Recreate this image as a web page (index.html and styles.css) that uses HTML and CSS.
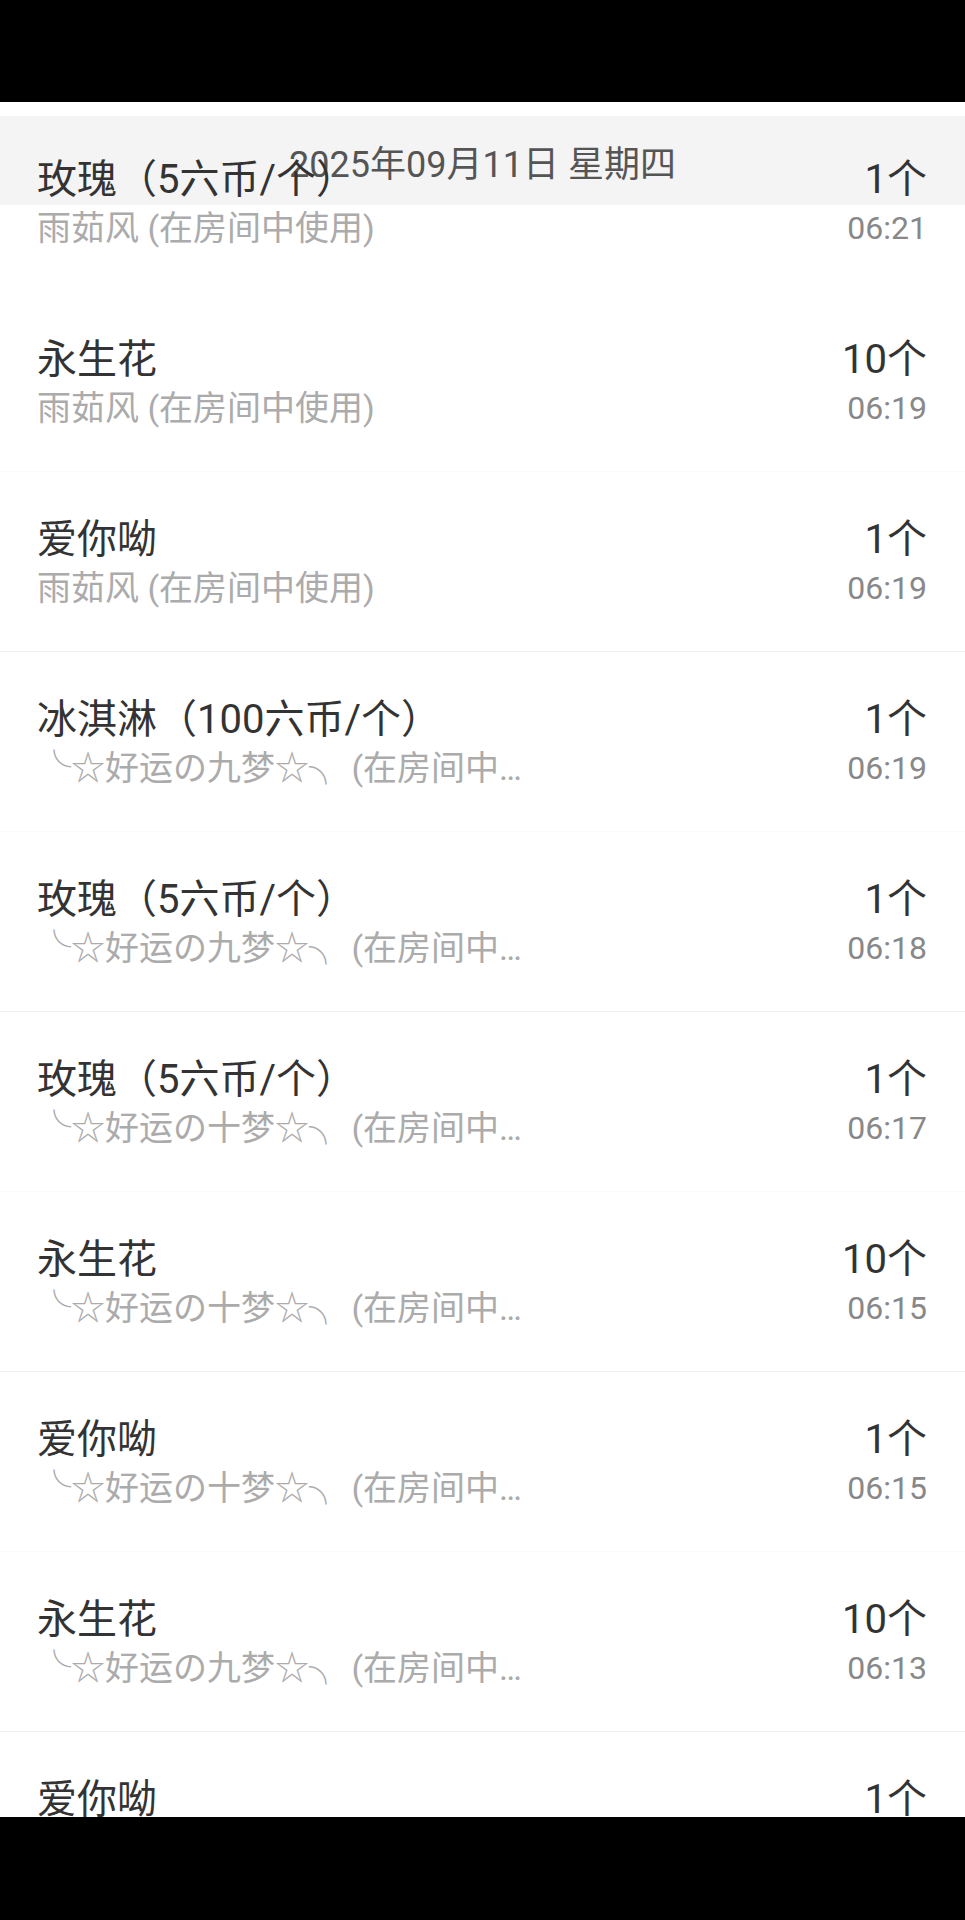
FILE: index.html
```html
<!DOCTYPE html>
<html lang="zh-CN">
<head>
<meta charset="utf-8">
<title>礼物记录</title>
<link rel="stylesheet" href="styles.css">
</head>
<body>
<div class="screen">
  <div class="date-bar">2025年09月11日 星期四</div>
  <ul class="list">
    <li class="row">
      <div class="main"><div class="title">玫瑰（5六币/个）</div><div class="sub">雨茹风 (在房间中使用)</div></div>
      <div class="side"><div class="count">1个</div><div class="time">06:21</div></div>
    </li>
    <li class="row">
      <div class="main"><div class="title">永生花</div><div class="sub">雨茹风 (在房间中使用)</div></div>
      <div class="side"><div class="count">10个</div><div class="time">06:19</div></div>
    </li>
    <li class="row">
      <div class="main"><div class="title">爱你呦</div><div class="sub">雨茹风 (在房间中使用)</div></div>
      <div class="side"><div class="count">1个</div><div class="time">06:19</div></div>
    </li>
    <li class="row">
      <div class="main"><div class="title">冰淇淋（100六币/个）</div><div class="sub">╰☆好运の九梦☆╮ (在房间中使用)</div></div>
      <div class="side"><div class="count">1个</div><div class="time">06:19</div></div>
    </li>
    <li class="row">
      <div class="main"><div class="title">玫瑰（5六币/个）</div><div class="sub">╰☆好运の九梦☆╮ (在房间中使用)</div></div>
      <div class="side"><div class="count">1个</div><div class="time">06:18</div></div>
    </li>
    <li class="row">
      <div class="main"><div class="title">玫瑰（5六币/个）</div><div class="sub">╰☆好运の十梦☆╮ (在房间中使用)</div></div>
      <div class="side"><div class="count">1个</div><div class="time">06:17</div></div>
    </li>
    <li class="row">
      <div class="main"><div class="title">永生花</div><div class="sub">╰☆好运の十梦☆╮ (在房间中使用)</div></div>
      <div class="side"><div class="count">10个</div><div class="time">06:15</div></div>
    </li>
    <li class="row">
      <div class="main"><div class="title">爱你呦</div><div class="sub">╰☆好运の十梦☆╮ (在房间中使用)</div></div>
      <div class="side"><div class="count">1个</div><div class="time">06:15</div></div>
    </li>
    <li class="row">
      <div class="main"><div class="title">永生花</div><div class="sub">╰☆好运の九梦☆╮ (在房间中使用)</div></div>
      <div class="side"><div class="count">10个</div><div class="time">06:13</div></div>
    </li>
    <li class="row">
      <div class="main"><div class="title">爱你呦</div><div class="sub">╰☆好运の九梦☆╮ (在房间中使用)</div></div>
      <div class="side"><div class="count">1个</div><div class="time">06:13</div></div>
    </li>
  </ul>
</div>
</body>
</html>
```

FILE: styles.css
```css
html, body {
  margin: 0;
  padding: 0;
  background: #000;
}
body {
  font-family: Roboto, "Noto Sans CJK SC", sans-serif;
  padding-top: 102px;
  height: 1920px;
  box-sizing: border-box;
}
.screen {
  position: relative;
  height: 1715px;
  background: #fff;
  overflow: hidden;
}
.date-bar {
  position: absolute;
  top: 14px;
  left: 0;
  right: 0;
  height: 89px;
  background: #f4f4f4;
  color: #555;
  font-size: 36px;
  display: flex;
  align-items: center;
  justify-content: center;
  z-index: 0;
}
.list {
  position: relative;
  z-index: 1;
  list-style: none;
  margin: 0;
  padding: 10px 0 0;
}
.row {
  display: flex;
  justify-content: space-between;
  padding: 44px 38px 39px 37px;
  border-bottom: 1px solid #fbfbfb;
}
.row:nth-child(odd) {
  border-bottom-color: #f1f1f1;
}
.row:first-child {
  border-bottom-color: #fdfdfd;
}
.main {
  display: flex;
  flex-direction: column;
  min-width: 0;
}
.title {
  font-size: 40px;
  line-height: 48px;
  color: #333;
  white-space: nowrap;
}
.sub {
  font-size: 34px;
  line-height: 48px;
  color: #ababab;
  white-space: nowrap;
  overflow: hidden;
  text-overflow: ellipsis;
  max-width: 500px;
}
.side {
  display: flex;
  flex-direction: column;
  align-items: flex-end;
}
.count {
  font-size: 40px;
  line-height: 48px;
  color: #333;
}
.time {
  font-size: 32px;
  line-height: 48px;
  color: #888;
}
```
